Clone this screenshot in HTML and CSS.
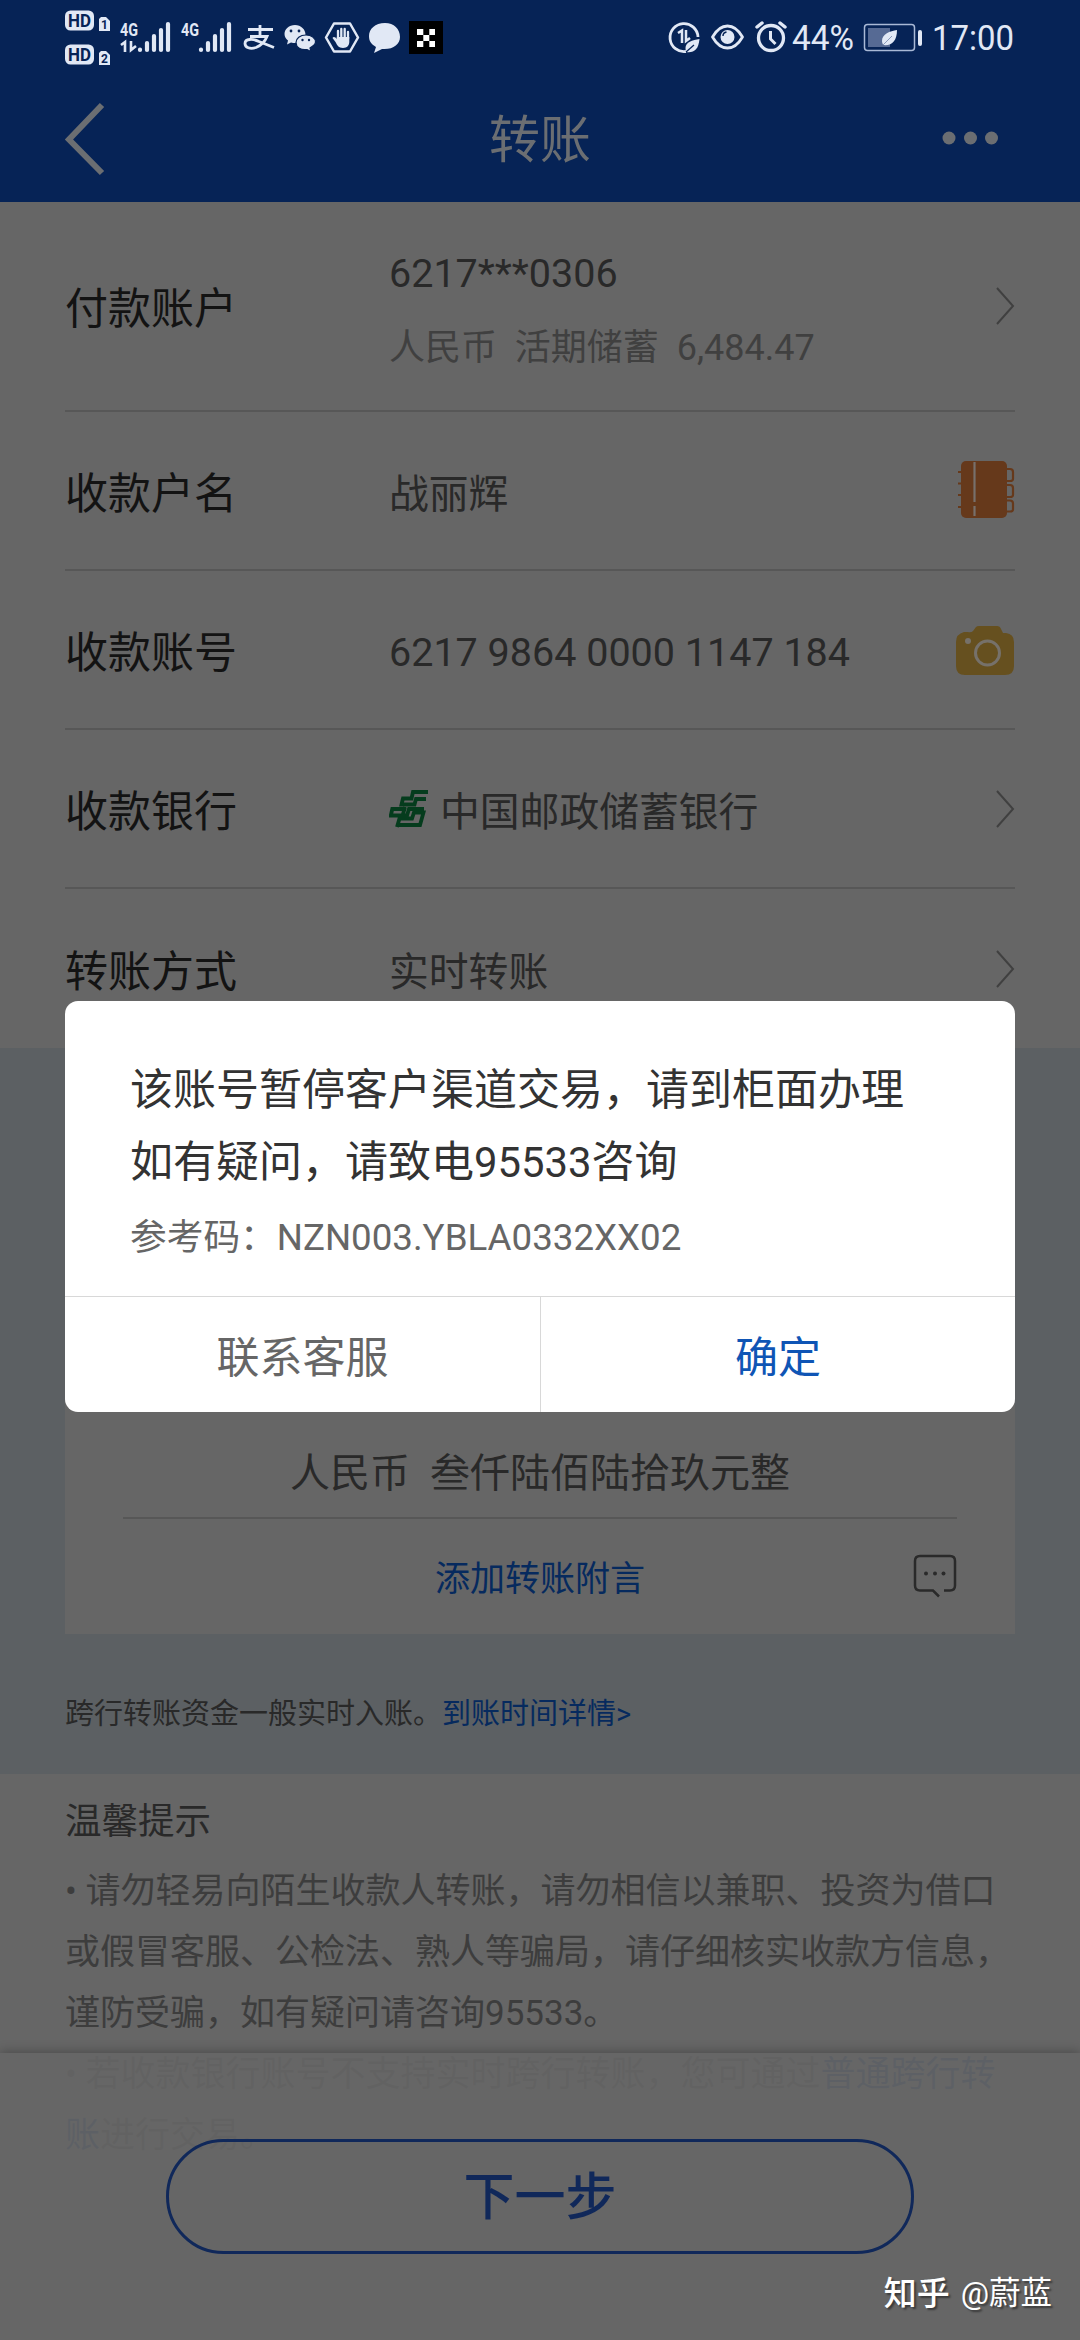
FILE: index.html
```
<!DOCTYPE html>
<html lang="zh-CN">
<head>
<meta charset="utf-8">
<title>转账</title>
<link rel="stylesheet" href="styles.css">
</head>
<body>
<div class="screen">
  <header class="header">
    <div class="status">
      <svg width="410" height="76" viewBox="0 0 410 76" fill="#e1e8f5">
        <rect x="15" y="10.500" width="29" height="20" rx="5.500"/>
        <text class="hd" x="18" y="27" textLength="23" lengthAdjust="spacingAndGlyphs">HD</text>
        <path d="M51 17h5l4 4v10H49V19z"/>
        <text class="sim" x="51" y="29">1</text>
        <rect x="15" y="44.500" width="29" height="20" rx="5.500"/>
        <text class="hd" x="18" y="61" textLength="23" lengthAdjust="spacingAndGlyphs">HD</text>
        <path d="M51 51h5l4 4v10H49V53z"/>
        <text class="sim" x="51" y="63">2</text>
        <text class="net" x="70" y="36" textLength="18" lengthAdjust="spacingAndGlyphs">4G</text>
        <text class="net" x="131" y="36" textLength="18" lengthAdjust="spacingAndGlyphs">4G</text>
        <path d="M71 45l4-3v10M81 41v9l5-4" fill="none" stroke="#e1e8f5" stroke-width="2.600"/>
        <g fill="none" stroke="#e1e8f5" stroke-width="4.200" stroke-linecap="round">
          <path d="M90 49.500v.5M97 43v7M104 36v14M111 30v20M118 24v26"/>
          <path d="M151 49.500v.5M158 43v7M165 36v14M172 30v20M179 24v26"/>
        </g>
        <g fill="none" stroke="#e1e8f5" stroke-width="2.800">
          <path d="M198 29.500h25M210 25v12M200 36.500h17c-2 5-6 9-11 11-6 2-11 0-11-4 0-5 8-5 14-2l15 6"/>
        </g>
        <path d="M245 25c-6 0-10.500 4-10.500 9 0 3 1.500 5 3.500 6.500l-1 4 4-2c8 2 14-2 14.500-8 0-5-4.500-9.500-10.500-9.500z"/>
        <path d="M256 35c-6 0-10 3.500-10 7.500 0 5 5 8 11 7l4 2-1-3.500c2-1.500 5.500-3 5.500-6 0-4-4-7-9.500-7z" stroke="#062356" stroke-width="1.200"/>
        <g fill="#062356"><circle cx="241" cy="31" r="1.400"/><circle cx="249" cy="31" r="1.400"/><circle cx="252.500" cy="40" r="1.200"/><circle cx="259" cy="40" r="1.200"/></g>
        <path d="M284 23.500h16l8 14-8 14h-16l-8-14z" fill="none" stroke="#e1e8f5" stroke-width="2.500" stroke-linejoin="round"/>
        <path d="M288 39V31M291.300 38V29M294.700 38V29M298 39V32" stroke="#e1e8f5" stroke-width="2.300" stroke-linecap="round"/>
        <path d="M286.800 37h12.500v5c0 3-2 6-6.300 6s-6-3-7.500-6l-3-4c1-2 3-1 4.300 1z"/>
        <path d="M335 23c-10 0-16 6-16 13 0 5 2 8 7 11l-2 6 8-4c11 1 18-5 18-12 0-8-6-14-15-14z"/>
        <rect x="359" y="21" width="34" height="33" fill="#000"/>
        <path fill="#fff" d="M367 29h6.300v6H379.300v-6H385v6h-5.700v6H385v6h-5.700v-6H373.300v6H367v-6h6.300v-6H367z"/>
      </svg>
      <svg width="400" height="76" viewBox="0 0 400 76" fill="#e1e8f5">
        <path d="M36 51.500A14 14 0 1 1 48 37" fill="none" stroke="#e1e8f5" stroke-width="2.800"/>
        <path d="M28 33l4-2.500V43M36 30v11l4-3" fill="none" stroke="#e1e8f5" stroke-width="2.500"/>
        <path d="M49.500 39c-7 1-14 3-14 9 0 2 .5 3 1 4 7 1 12-2 13-13z"/>
        <path d="M36 52l8-7" stroke="#062356" stroke-width="1.200"/>
        <path d="M62.500 37c4-7 9.500-11 15-11s11 4 15 11c-4 7-9.500 11-15 11s-11-4-15-11z" fill="none" stroke="#e1e8f5" stroke-width="2.800" stroke-linejoin="round"/>
        <circle cx="77.500" cy="37" r="7"/>
        <path d="M73 36c0-2 1-3.500 3.500-4" fill="none" stroke="#062356" stroke-width="1.500"/>
        <circle cx="121" cy="38" r="12.500" fill="none" stroke="#e1e8f5" stroke-width="3.300"/>
        <path d="M107 27l5-4M135 27l-5-4" stroke="#e1e8f5" stroke-width="3.500" stroke-linecap="round"/>
        <path d="M120.500 31v8l5 5" fill="none" stroke="#e1e8f5" stroke-width="3"/>
        <text class="clock" x="142" y="50" textLength="62" lengthAdjust="spacingAndGlyphs">44%</text>
        <rect x="214.500" y="24.500" width="50" height="26" rx="3" fill="none" stroke="#a9b9d6" stroke-width="1.500"/>
        <rect x="218" y="28" width="22" height="19" fill="#566a94"/>
        <path d="M247 30c-7 1-15 4-15 11 0 2 1 3 1 4 9 1 14-4 14-15z"/>
        <path d="M233 45l9-9" stroke="#8a9abb" stroke-width="1"/>
        <rect x="268" y="30" width="4" height="16" rx="2"/>
        <text class="clock" x="282" y="50" textLength="82" lengthAdjust="spacingAndGlyphs">17:00</text>
      </svg>
    </div>
    <div class="titlebar">
      <svg width="42" height="74" viewBox="0 0 42 74" fill="none" stroke="#6b6e72" stroke-width="6"><path d="M38 3L5 37.500 38 71"/></svg>
      <h1 class="title">转账</h1>
      <svg width="58" height="16" viewBox="0 0 58 16" fill="#6b6e72"><circle cx="7" cy="7" r="6.500"/><circle cx="28.500" cy="7" r="6.500"/><circle cx="49.500" cy="7" r="6.500"/></svg>
    </div>
  </header>

  <main class="form">
    <div class="row row-tall">
      <span class="label">付款账户</span>
      <div class="value stack"><span>6217***0306</span><span class="sub">人民币&nbsp; 活期储蓄&nbsp; 6,484.47</span></div>
      <svg class="arrow" width="19" height="38" viewBox="0 0 19 38"><path d="M1 1l16 18L1 37"/></svg>
    </div>
    <div class="row">
      <span class="label">收款户名</span>
      <span class="value">战丽辉</span>
      <svg class="book" width="58" height="60" viewBox="0 0 58 60">
        <path d="M1 13h5M1 24.500h5M1 36h5M1 48h5M48 10h5q3 0 3 3v7q0 2-3 2h-5M48 26h5q3 0 3 3v7q0 2-3 2h-5M48 41.500h5q3 0 3 3v6q0 2-3 2h-5" fill="none" stroke="#66391b" stroke-width="2.200"/>
        <rect x="4" y="2" width="46" height="57" rx="5" fill="#66391b"/>
        <path d="M17.500 3v40M17.500 47v10" stroke="#77706b" stroke-width="2.200"/>
      </svg>
    </div>
    <div class="row">
      <span class="label">收款账号</span>
      <span class="value number">6217 9864 0000 1147 184</span>
      <svg class="camera" width="59" height="50" viewBox="0 0 59 50">
        <path d="M8 6h4q3 1 5-1l3-4q1-1 3-1h18q3 0 4 3l2 4h3q8 1 8 9v24q0 9-9 9H9q-9 0-9-9V16Q0 8 8 6z" fill="#66501f"/>
        <circle cx="31.500" cy="27" r="12" fill="none" stroke="#76716a" stroke-width="3"/>
        <circle cx="12" cy="15" r="3" fill="#76716a"/>
      </svg>
    </div>
    <div class="row">
      <span class="label">收款银行</span>
      <span class="value bank">
        <svg width="41" height="38" viewBox="0 0 41 38" fill="none" stroke="#053c1d" stroke-width="3.800">
          <path d="M39 2H24l-1.500 6.500H14l-1.500 6H25.500L27 9h10"/>
          <path d="M16 17l-2 7M35 19H20l-2 6.500H1.800L3.300 19H17M8 37l2.500-8.500H23l2-6h9.500L31 35H9"/>
        </svg>
        中国邮政储蓄银行
      </span>
      <svg class="arrow" width="19" height="38" viewBox="0 0 19 38"><path d="M1 1l16 18L1 37"/></svg>
    </div>
    <div class="row row-last">
      <span class="label">转账方式</span>
      <span class="value">实时转账</span>
      <svg class="arrow" width="19" height="38" viewBox="0 0 19 38"><path d="M1 1l16 18L1 37"/></svg>
    </div>
  </main>

  <section class="amount">
    <div class="amount-card">
      <div class="words">人民币&nbsp; 叁仟陆佰陆拾玖元整</div>
      <div class="memo">
        <a class="link">添加转账附言</a>
        <svg width="44" height="44" viewBox="0 0 44 44" fill="none" stroke="#2a2a2a" stroke-width="2.500"><path d="M31 36.500h6q5 0 5-5V7q0-5-5-5H7Q2 2 2 7v24.500q0 5 5 5h13l6 6"/><g fill="#2a2a2a" stroke="none"><circle cx="13" cy="19.500" r="2"/><circle cx="22" cy="19.500" r="2"/><circle cx="30.500" cy="19.500" r="2"/></g></svg>
      </div>
    </div>
    <p class="arrival">跨行转账资金一般实时入账。<a class="link">到账时间详情&gt;</a></p>
  </section>

  <section class="tips">
    <h2 class="tips-title">温馨提示</h2>
    <p class="tip">• 请勿轻易向陌生收款人转账，请勿相信以兼职、投资为借口<br>或假冒客服、公检法、熟人等骗局，请仔细核实收款方信息，<br>谨防受骗，如有疑问请咨询95533。</p>
    <p class="tip">• 若收款银行账号不支持实时跨行转账，您可通过<a class="link">普通跨行转<br>账</a>进行交易。</p>
  </section>

  <footer class="footer">
    <button class="next">下一步</button>
  </footer>

  <div class="dialog">
    <div class="dialog-body">
      <p class="message">该账号暂停客户渠道交易，请到柜面办理<br>如有疑问，请致电<span class="phone">95533</span>咨询</p>
      <p class="code">参考码：NZN003.YBLA0332XX02</p>
    </div>
    <div class="actions">
      <button class="action">联系客服</button>
      <button class="action primary">确定</button>
    </div>
  </div>

  <div class="watermark"><b>知乎</b><span>@蔚蓝</span></div>
</div>
</body>
</html>
```

FILE: styles.css
```
* { box-sizing: border-box; }
body { margin: 0; background: #666; font-family: Roboto, "Noto Sans CJK SC", sans-serif; }
h1, h2, p { margin: 0; font-weight: 400; }
button { font-family: inherit; background: none; border: 0; padding: 0; }
svg { display: block; flex: none; }
.screen { position: relative; width: 1080px; height: 2340px; overflow: hidden; background: #666; }

.header { height: 202px; background: #062356; }
.status { display: flex; justify-content: space-between; height: 76px; padding: 0 30px 0 50px; }
.hd { font: bold 18px Roboto, sans-serif; fill: #062356; }
.sim { font: bold 12px Roboto, sans-serif; fill: #062356; }
.net { font: bold 19px Roboto, sans-serif; }
.clock { font: 35px Roboto, sans-serif; }
.titlebar { display: grid; grid-template-columns: 58px 1fr 58px; align-items: center; height: 126px; padding: 0 80px 0 64px; }
.title { padding: 4px 0 0 16px; font-size: 51px; line-height: 74px; text-align: center; color: #6b6e72; }

.row { display: flex; align-items: center; height: 159px; margin: 0 65px; border-bottom: 2px solid #575757; }
.row-tall { height: 210px; }
.row-last { border-bottom: 0; }
.label { width: 324px; padding-bottom: 2px; font-size: 43px; color: #131313; }
.value { flex: 1; font-size: 39.800px; color: #292929; white-space: nowrap; }
.number { padding-top: 5px; font-size: 39.500px; }
.stack { display: flex; flex-direction: column; padding-top: 9px; font-size: 39.500px; }
.stack span { height: 74px; line-height: 74px; }
.stack .sub { font-size: 36px; color: #404040; }
.arrow { fill: none; stroke: #404040; stroke-width: 2; }
.book { margin-bottom: 3px; }
.camera { margin-top: 3px; }
.bank { display: flex; align-items: center; gap: 10px; }

.amount { height: 726px; padding: 30px 65px 0; background: #5c6063; }
.amount-card { display: flex; flex-direction: column; justify-content: flex-end; height: 556px; padding: 0 58px; background: #666; }
.words { height: 90px; line-height: 90px; text-align: center; font-size: 40px; color: #292929; border-bottom: 2px solid #575757; }
.memo { display: grid; grid-template-columns: 44px 1fr 44px; align-items: center; height: 115px; padding-bottom: 2px; font-size: 35px; text-align: center; }
.memo .link { grid-column: 2; }
.link { color: #062a5e; }
.arrival { margin-top: 58px; font-size: 29px; line-height: 44px; color: #292929; }

.tips { padding: 21px 65px 0; }
.tips-title { margin-bottom: 12px; font-size: 36.500px; line-height: 54px; color: #292929; }
.tip { font-size: 35px; line-height: 61px; color: #3d3d3d; white-space: nowrap; }

.footer { position: absolute; left: 0; right: 0; bottom: 0; height: 287px; padding-top: 86px; background: rgba(102, 102, 102, .91); box-shadow: 0 -2px 10px rgba(0, 0, 0, .25); }
.next { display: block; width: 748px; height: 115px; margin: 0 auto; padding-bottom: 7px; border: 3px solid #10285a; border-radius: 58px; font-size: 51px; font-weight: 500; color: #10285a; }

.dialog { position: absolute; left: 65px; top: 1001px; width: 950px; height: 411px; display: flex; flex-direction: column; background: #fff; border-radius: 13px; }
.dialog-body { flex: 1; padding: 53px 65px 0; white-space: nowrap; }
.message { font-size: 43px; line-height: 72px; color: #333; }
.phone { font-size: 41.800px; }
.code { margin-top: 12px; font-size: 36.700px; line-height: 54px; color: #666; }
.actions { display: grid; grid-template-columns: 1fr 1fr; height: 116px; border-top: 1px solid #d8d8d8; }
.action { padding-bottom: 2px; font-size: 43px; color: #666; }
.primary { color: #0f55b5; border-left: 1px solid #d8d8d8; }

.watermark { position: absolute; right: 28px; bottom: 22px; display: flex; align-items: center; gap: 11px; font-size: 31.500px; line-height: 48px; color: #fff; text-shadow: 2px 2px 2px rgba(0, 0, 0, .45); }
.watermark b { font-size: 33px; font-weight: 500; }
```
